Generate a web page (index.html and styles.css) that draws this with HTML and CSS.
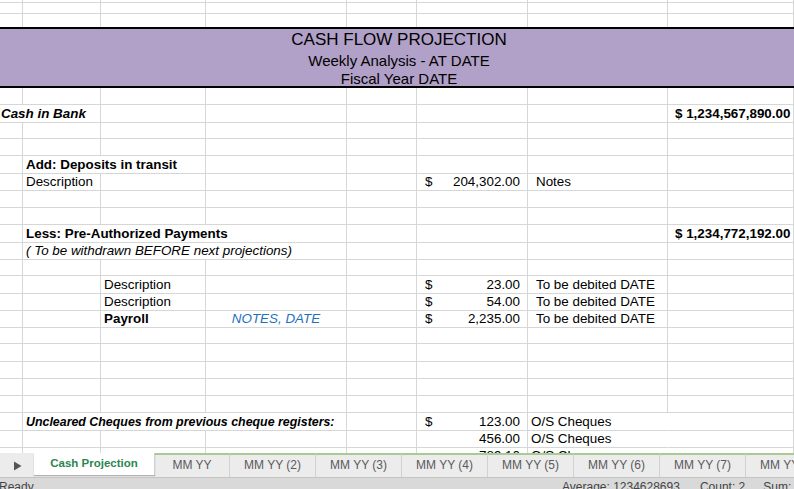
FILE: index.html
```html
<!DOCTYPE html>
<html>
<head>
<meta charset="utf-8">
<link rel="stylesheet" href="styles.css">
</head>
<body>
<div class="app">
  <div class="sheet">
    <div class="row r0"><div></div><div></div><div></div><div></div><div></div><div></div><div></div><div></div></div>
    <div class="row r1"><div></div><div></div><div></div><div></div><div></div><div></div><div></div><div></div></div>
    <div class="row r2"><div></div><div></div><div></div><div></div><div></div><div></div><div></div><div></div></div>
    <div class="title">
      <div class="t1">CASH FLOW PROJECTION</div>
      <div class="t2">Weekly Analysis - AT DATE</div>
      <div class="t3">Fiscal Year DATE</div>
    </div>
    <!-- k0 -->
    <div class="row"><div></div><div></div><div></div><div></div><div></div><div></div><div></div><div></div></div>
    <!-- k1 -->
    <div class="row"><div class="nr a bi">Cash in Bank</div><div></div><div></div><div></div><div></div><div></div><div></div><div class="b val">$ 1,234,567,890.00</div></div>
    <div class="row"><div></div><div></div><div></div><div></div><div></div><div></div><div></div><div></div></div>
    <div class="row"><div></div><div></div><div></div><div></div><div></div><div></div><div></div><div></div></div>
    <!-- k4 -->
    <div class="row"><div></div><div class="nr b">Add: Deposits in transit</div><div></div><div></div><div></div><div></div><div></div><div></div></div>
    <!-- k5 -->
    <div class="row"><div></div><div>Description</div><div></div><div></div><div></div><div class="amt"><span>$</span><span>204,302.00</span></div><div class="note">Notes</div><div></div></div>
    <div class="row"><div></div><div></div><div></div><div></div><div></div><div></div><div></div><div></div></div>
    <div class="row"><div></div><div></div><div></div><div></div><div></div><div></div><div></div><div></div></div>
    <!-- k8 -->
    <div class="row"><div></div><div class="nr b">Less: Pre-Authorized Payments</div><div class="nr"></div><div></div><div></div><div></div><div></div><div class="b val">$ 1,234,772,192.00</div></div>
    <!-- k9 -->
    <div class="row"><div></div><div class="nr i">( To be withdrawn BEFORE next projections)</div><div class="nr"></div><div></div><div></div><div></div><div></div><div></div></div>
    <div class="row"><div></div><div></div><div></div><div></div><div></div><div></div><div></div><div></div></div>
    <!-- k11 -->
    <div class="row"><div></div><div></div><div>Description</div><div></div><div></div><div class="amt"><span>$</span><span>23.00</span></div><div class="note">To be debited DATE</div><div></div></div>
    <div class="row"><div></div><div></div><div>Description</div><div></div><div></div><div class="amt"><span>$</span><span>54.00</span></div><div class="note">To be debited DATE</div><div></div></div>
    <div class="row"><div></div><div></div><div class="b">Payroll</div><div class="blue">NOTES, DATE</div><div></div><div class="amt"><span>$</span><span>2,235.00</span></div><div class="note">To be debited DATE</div><div></div></div>
    <!-- k14-18 -->
    <div class="row"><div></div><div></div><div></div><div></div><div></div><div></div><div></div><div></div></div>
    <div class="row"><div></div><div></div><div></div><div></div><div></div><div></div><div></div><div></div></div>
    <div class="row"><div></div><div></div><div></div><div></div><div></div><div></div><div></div><div></div></div>
    <div class="row"><div></div><div></div><div></div><div></div><div></div><div></div><div></div><div></div></div>
    <div class="row"><div></div><div></div><div></div><div></div><div></div><div></div><div></div><div></div></div>
    <!-- k19 -->
    <div class="row"><div></div><div class="nr bi narrow">Uncleared Cheques from previous cheque registers:</div><div class="nr"></div><div></div><div></div><div class="amt"><span>$</span><span>123.00</span></div><div class="nr os">O/S Cheques</div><div></div></div>
    <div class="row"><div></div><div></div><div></div><div></div><div></div><div class="amt"><span></span><span>456.00</span></div><div class="nr os">O/S Cheques</div><div></div></div>
    <div class="row"><div></div><div></div><div></div><div></div><div></div><div class="amt"><span></span><span>789.10</span></div><div class="nr os">O/S Cheques</div><div></div></div>
  </div>
  <div class="tabs">
    <div class="arrow"><svg width="9" height="10" viewBox="0 0 9 10"><path d="M1 0.5 L8.5 5 L1 9.5 Z" fill="#555"/></svg></div>
    <div class="tab active">Cash Projection</div>
    <div class="tab w75">MM YY</div>
    <div class="tab">MM YY (2)</div>
    <div class="tab">MM YY (3)</div>
    <div class="tab">MM YY (4)</div>
    <div class="tab">MM YY (5)</div>
    <div class="tab">MM YY (6)</div>
    <div class="tab">MM YY (7)</div>
    <div class="tab">MM YY (8)</div>
  </div>
  <div class="status">
    <span class="ready">Ready</span>
    <span>Average: 1234628693</span>
    <span class="count">Count: 2</span>
    <span class="sum">Sum: 2469257386</span>
  </div>
</div>
</body>
</html>
```
FILE: styles.css
```css
html, body {
  margin: 0;
  padding: 0;
  background: #fff;
  overflow: hidden;
}
body {
  width: 794px;
  height: 489px;
  font-family: "Liberation Sans", Arial, sans-serif;
  color: #000;
}
.app {
  display: flex;
  flex-direction: column;
  height: 489px;
  overflow: hidden;
}
.sheet {
  height: 453px;
  flex: 0 0 453px;
  overflow: hidden;
}
.row {
  display: grid;
  grid-template-columns: 23px 78px 105px 141px 70px 111px 140px 126px;
  height: 17.1px;
}
.row > div {
  box-sizing: border-box;
  border-right: 1px solid #d6d6d6;
  border-bottom: 1px solid #d6d6d6;
  white-space: nowrap;
  padding-left: 3px;
  padding-top: 1px;
  font-size: 13.4px;
  line-height: 16px;
  min-width: 0;
}
.row > div.nr {
  border-right-color: transparent;
}
.r0 { height: 3px; }
.r1 { height: 11px; }
.r2 { height: 13px; }
.r0 > div, .r1 > div, .r2 > div { padding-top: 0; }
.r2 > div { border-bottom: none; }

.title {
  box-sizing: border-box;
  height: 61px;
  background: #b1a0c7;
  border-top: 2px solid #000;
  border-bottom: 2px solid #000;
  text-align: center;
  padding-left: 4px;
  padding-top: 1px;
  color: #000;
}
.t1 { font-size: 17px; line-height: 20px; }
.t2 { font-size: 15px; line-height: 21px; }
.t3 { font-size: 15px; line-height: 15px; }

.a { padding-left: 1px !important; }
.b { font-weight: bold; }
.i { font-style: italic; }
.bi { font-weight: bold; font-style: italic; }
.narrow { font-size: 12.4px !important; }
.val { padding-left: 7px !important; }
.blue {
  color: #1f6fc2;
  font-style: italic;
  text-align: center;
  padding-left: 0 !important;
}
.amt {
  display: flex;
  justify-content: space-between;
  padding-left: 8px !important;
  padding-right: 7px;
}
.note { padding-left: 8px !important; }
.os { padding-left: 3px !important; }

.tabs {
  flex: 0 0 25px;
  height: 25px;
  display: flex;
  background: #ececec;
  border-bottom: 1px solid #c4c4c4;
  box-sizing: border-box;
  overflow: hidden;
  white-space: nowrap;
}
.arrow {
  flex: 0 0 34px;
  display: flex;
  align-items: center;
  justify-content: center;
  padding-top: 1px;
  box-sizing: border-box;
}
.tab {
  flex: 0 0 86px;
  box-sizing: border-box;
  border-top: 2px solid #abc992;
  border-right: 1px solid #d2d2d2;
  text-align: center;
  font-size: 12px;
  line-height: 20px;
  color: #5a5a5a;
}
.tab.w75 { flex-basis: 75px; }
.tab.active {
  flex: 0 0 121px;
  background: #fff;
  border: none;
  border-right: 1px solid #d0d0d0;
  color: #2a8650;
  font-weight: bold;
  font-size: 11.5px;
  line-height: 21px;
  height: 22px;
  box-shadow: 0 1px 1px rgba(0,0,0,0.25);
  position: relative;
  z-index: 1;
}
.status {
  flex: 0 0 22px;
  display: flex;
  background: #d9d9d9;
  font-size: 12px;
  line-height: 14px;
  padding-top: 2px;
  color: #444;
  white-space: nowrap;
}
.ready {
  flex: 0 0 563px;
  margin-left: -1px;
}
.count { margin-left: 20px; }
.sum { margin-left: 18px; }
```
